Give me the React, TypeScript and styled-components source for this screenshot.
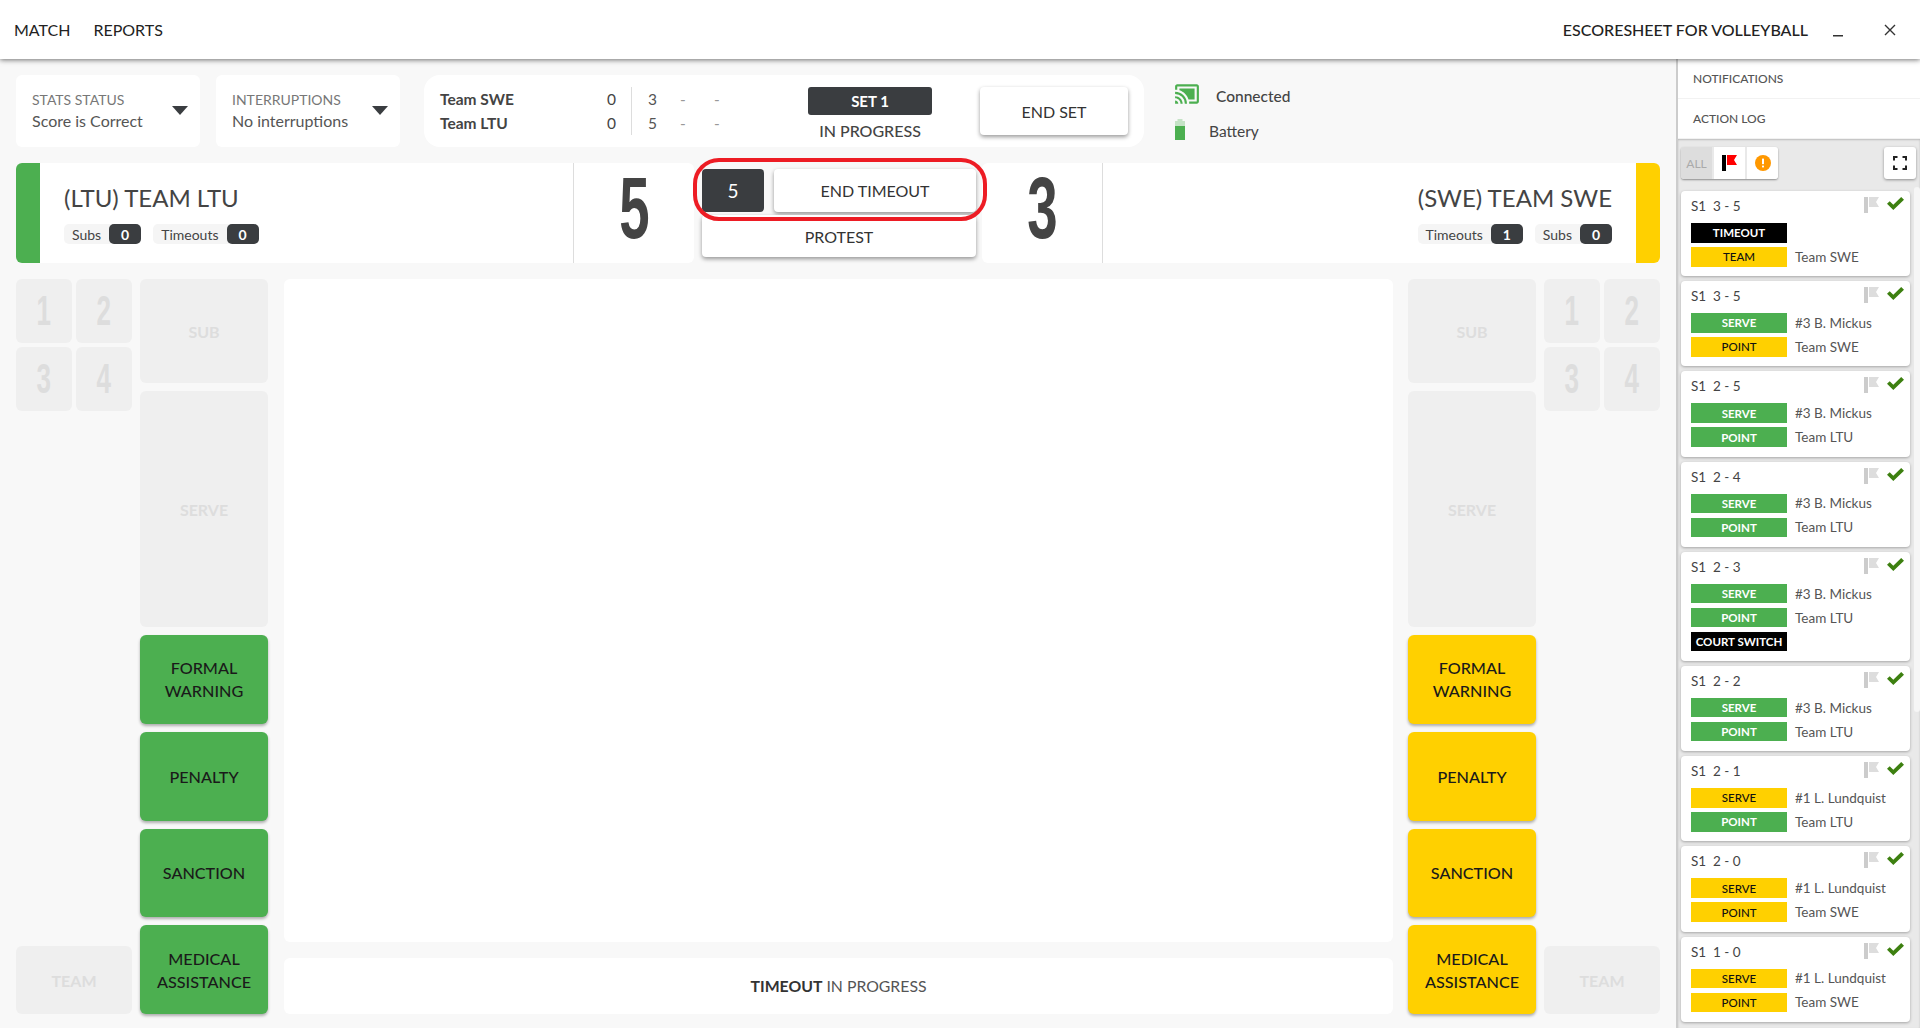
import React from 'react';
import styled, {createGlobalStyle} from 'styled-components';
import {MdCastConnected} from 'react-icons/md';

const GREEN = '#4caf50';
const YELLOW = '#ffd000';
const DARK = '#3a3d40';

const Global = createGlobalStyle`
  html, body { margin: 0; padding: 0; height: 1028px; overflow: hidden; background: #f8f8f8; }
  * { box-sizing: border-box; }
  body { font-family: "Lato", "Liberation Sans", sans-serif; color: #444; }
`;

const Page = styled.div`
  width: 1920px;
  height: 1028px;
  display: flex;
  flex-direction: column;
  overflow: hidden;
`;

const TopBar = styled.header`
  height: 59px;
  flex: none;
  background: #fff;
  display: flex;
  align-items: center;
  padding: 0 24px 0 14px;
  box-shadow: 0 1px 5px rgba(0, 0, 0, .55);
  position: relative;
  z-index: 2;
  color: #222;
  font-size: 16px;
`;

const NavItem = styled.span`
  margin-right: 23px;
`;

const AppTitle = styled.span`
  margin-left: auto;
  font-weight: 500;
  font-size: 16px;
`;

const MinimizeButton = styled.span`
  margin-left: 24px;
  display: flex;
  align-items: center;
  width: 12px;
  height: 20px;
`;

const CloseButton = styled(MinimizeButton)`
  margin-left: 40px;
`;

const Body = styled.div`
  flex: 1;
  display: flex;
  min-height: 0;
`;

const Main = styled.main`
  width: 1676px;
  padding: 16px 16px 14px 16px;
  display: flex;
  flex-direction: column;
  gap: 16px;
`;

const StatusRow = styled.div`
  height: 72px;
  display: flex;
`;

const Select = styled.div`
  width: 184px;
  margin-right: 16px;
  background: #fff;
  border-radius: 6px;
  padding: 15px 16px;
  position: relative;
`;

const SelectLabel = styled.div`
  font-size: 14px;
  line-height: 19px;
  color: #777;
`;

const SelectValue = styled.div`
  font-size: 16px;
  line-height: 20px;
  margin-top: 2px;
  color: #555;
`;

const Caret = styled.span`
  position: absolute;
  right: 12px;
  top: 31px;
  border-left: 8px solid transparent;
  border-right: 8px solid transparent;
  border-top: 9px solid ${DARK};
`;

const ScoreCard = styled.div`
  width: 720px;
  margin-left: 8px;
  background: #fff;
  border-radius: 16px;
  display: flex;
  align-items: center;
  padding: 0 16px;
`;

const Scores = styled.div`
  width: 312px;
  display: grid;
  grid-template-columns: 160px 32px 34px 34px 34px;
  grid-auto-rows: 24px;
  font-size: 15.5px;
  align-items: center;
`;

const TeamCode = styled.span`
  font-weight: 700;
  color: #444;
`;

const SetsWon = styled.span`
  text-align: right;
  border-right: 1px solid #ddd;
  line-height: 24px;
  padding-right: 15px;
`;

const SetScore = styled.span`
  text-align: left;
  padding-left: 16px;
  color: #555;
`;

const SetDash = styled(SetScore)`
  padding-left: 14px;
  color: #999;
`;

const SetInfo = styled.div`
  width: 124px;
  margin: 12px 0 0 56px;
  align-self: flex-start;
  display: flex;
  flex-direction: column;
  align-items: center;
`;

const SetPill = styled.div`
  width: 100%;
  height: 28px;
  background: ${DARK};
  color: #fff;
  font-weight: 700;
  font-size: 15px;
  border-radius: 3px;
  display: flex;
  align-items: center;
  justify-content: center;
`;

const SetState = styled.div`
  margin-top: 4px;
  font-size: 16px;
  line-height: 24px;
  font-weight: 500;
  color: #444;
`;

const ActionButton = styled.button`
  background: #fff;
  border: 0;
  border-radius: 4px;
  box-shadow: 0 2px 4px rgba(0, 0, 0, .4);
  font-family: inherit;
  font-size: 16px;
  color: #333;
  display: flex;
  align-items: center;
  justify-content: center;
  padding: 0;
`;

const EndSet = styled(ActionButton)`
  width: 148px;
  height: 48px;
  margin-left: 48px;
`;

const Health = styled.div`
  margin: 2px 0 0 30px;
  display: grid;
  grid-template-columns: 42px auto;
  grid-template-rows: 36px 35px;
  align-items: center;
  font-size: 15.5px;
  color: #444;
`;

const HealthIcon = styled.span`
  display: flex;
  color: ${GREEN};
  margin-top: -2px;
`;

const ConnectedLabel = styled.span`
  font-weight: 500;
  margin-top: 1px;
`;

const BatteryLabel = styled.span`
  margin-left: -7px;
`;

const TeamsRow = styled.div`
  height: 100px;
  display: flex;
  position: relative;
`;

const TeamCard = styled.section<{$reverse?: boolean}>`
  flex: 1;
  background: #fff;
  border-radius: 6px;
  display: flex;
  flex-direction: ${p => (p.$reverse ? 'row-reverse' : 'row')};
`;

const TeamBand = styled.div<{$color: string; $reverse?: boolean}>`
  width: 24px;
  flex: none;
  background: ${p => p.$color};
  border-radius: ${p => (p.$reverse ? '0 6px 6px 0' : '6px 0 0 6px')};
`;

const TeamInfo = styled.div<{$reverse?: boolean}>`
  flex: 1;
  display: flex;
  flex-direction: column;
  padding: 20px 24px;
  align-items: ${p => (p.$reverse ? 'flex-end' : 'flex-start')};
`;

const TeamName = styled.div`
  font-size: 24px;
  line-height: 30px;
  color: #444;
`;

const Chips = styled.div`
  display: flex;
  gap: 12px;
  margin-top: 11px;
`;

const Chip = styled.div`
  height: 20px;
  background: #f5f5f5;
  border-radius: 5px;
  display: flex;
  align-items: center;
  padding-left: 8px;
  font-size: 14px;
  color: #444;
`;

const ChipCount = styled.span`
  width: 32px;
  height: 20px;
  margin-left: 8px;
  background: ${DARK};
  color: #fff;
  border-radius: 5px;
  font-weight: 700;
  font-size: 14px;
  display: flex;
  align-items: center;
  justify-content: center;
`;

const BigScore = styled.div<{$reverse?: boolean}>`
  width: 121px;
  flex: none;
  display: flex;
  align-items: center;
  justify-content: center;
  padding-bottom: 11px;
  ${p => (p.$reverse ? 'border-right' : 'border-left')}: 1px solid #ddd;
`;

const CondensedDigit = styled.span<{$size: number; $color: string}>`
  display: inline-block;
  font-family: "Liberation Sans Narrow", "Liberation Sans", sans-serif;
  font-weight: 700;
  font-size: ${p => p.$size}px;
  line-height: 1;
  color: ${p => p.$color};
  transform: scaleX(.62);
`;

const CenterBox = styled.div`
  width: 274px;
  margin: 6px 6px 0 8px;
  display: flex;
  flex-direction: column;
  gap: 3px;
`;

const TimerRow = styled.div`
  display: flex;
  height: 43px;
  gap: 10px;
`;

const Timer = styled.div`
  width: 62px;
  background: ${DARK};
  color: #fff;
  border-radius: 4px;
  font-size: 19px;
  display: flex;
  align-items: center;
  justify-content: center;
`;

const EndTimeout = styled(ActionButton)`
  flex: 1;
`;

const Protest = styled(ActionButton)`
  height: 42px;
`;

const RedRing = styled.div`
  position: absolute;
  left: 677px;
  top: -5px;
  width: 294px;
  height: 63px;
  border: 4px solid #ed1c24;
  border-radius: 26px;
  pointer-events: none;
`;

const Court = styled.div`
  flex: 1;
  display: grid;
  grid-template-columns: 116px 128px 1fr 128px 116px;
  column-gap: 8px;
  min-height: 0;
`;

const PlayerColumn = styled.div`
  display: flex;
  flex-direction: column;
  justify-content: space-between;
`;

const PlayerGrid = styled.div`
  display: grid;
  grid-template-columns: 56px 56px;
  grid-auto-rows: 64px;
  gap: 4px;
`;

const Disabled = styled.div`
  background: #efefef;
  border-radius: 6px;
  color: #ddd;
  display: flex;
  align-items: center;
  justify-content: center;
  font-weight: 700;
  font-size: 16px;
`;

const TeamButton = styled(Disabled)`
  height: 68px;
`;

const ActionColumn = styled.div`
  display: flex;
  flex-direction: column;
  gap: 8px;
`;

const SubButton = styled(Disabled)`
  height: 104px;
`;

const ServeButton = styled(Disabled)`
  height: 236px;
`;

const CardButton = styled.div<{$color: string}>`
  flex: 1;
  background: ${p => p.$color};
  border-radius: 6px;
  box-shadow: 0 2px 3px rgba(0, 0, 0, .3);
  color: #1a1a1a;
  font-size: 16.2px;
  line-height: 23px;
  font-weight: 500;
  text-align: center;
  display: flex;
  align-items: center;
  justify-content: center;
`;

const CenterColumn = styled.div`
  margin: 0 7px 0 8px;
  display: flex;
  flex-direction: column;
  gap: 16px;
`;

const Board = styled.div`
  flex: 1;
  background: #fff;
  border-radius: 6px;
`;

const StateBar = styled.div`
  height: 56px;
  background: #fff;
  border-radius: 6px;
  display: flex;
  align-items: center;
  justify-content: center;
  font-size: 15.8px;
  color: #555;
  padding-bottom: 1px;
  b {
    color: #333;
    font-weight: 700;
    margin-right: 4px;
  }
`;

const Sidebar = styled.aside`
  width: 244px;
  border-left: 2px solid #ccc;
  display: flex;
  flex-direction: column;
  background: #e9e9e9;
  position: relative;
`;

const SideTab = styled.div`
  height: 40px;
  flex: none;
  background: #fff;
  border-bottom: 1px solid #f2f2f2;
  display: flex;
  align-items: center;
  padding-left: 15px;
  font-size: 12px;
  font-weight: 500;
  color: #555;
`;

const LogArea = styled.div`
  flex: 1;
  min-height: 0;
  padding: 8px 4px 0 3px;
  position: relative;
  box-shadow: inset 0 1px 2px rgba(0, 0, 0, .2);
  overflow: hidden;
`;

const Filters = styled.div`
  display: flex;
  justify-content: space-between;
  height: 32px;
  margin-bottom: 12px;
`;

const FilterGroup = styled.div`
  display: flex;
  gap: 2px;
  border-radius: 3px;
  overflow: hidden;
  box-shadow: 0 1px 2px rgba(0, 0, 0, .4);
`;

const FilterTab = styled.div<{$active?: boolean}>`
  width: 31px;
  height: 32px;
  background: ${p => (p.$active ? '#ddd' : '#fff')};
  color: #aaa;
  font-size: 12px;
  display: flex;
  align-items: center;
  justify-content: center;
`;

const ExpandButton = styled.div`
  width: 32px;
  height: 32px;
  background: #fff;
  border-radius: 3px;
  box-shadow: 0 1px 3px rgba(0, 0, 0, .4);
  display: flex;
  align-items: center;
  justify-content: center;
`;

const LogCard = styled.article`
  width: 229px;
  background: #fff;
  border-radius: 4px;
  padding: 7px 10px 9.7px;
  margin-bottom: 5px;
  box-shadow: 0 1px 3px rgba(0, 0, 0, .3);
`;

const LogHead = styled.div`
  height: 25px;
  display: flex;
  justify-content: space-between;
  font-size: 13.5px;
  line-height: 17px;
  color: #444;
  white-space: pre;
`;

const LogMarks = styled.span`
  display: flex;
  gap: 8px;
  margin-right: -4px;
  margin-top: -1px;
`;

const LogRow = styled.div`
  display: flex;
  align-items: center;
  height: 19.5px;
  margin-bottom: 4.5px;
  &:last-child { margin-bottom: 0; }
`;

const Tag = styled.span<{$bg: string; $fg: string; $weight: number}>`
  width: 96px;
  height: 100%;
  background: ${p => p.$bg};
  color: ${p => p.$fg};
  font-size: 11.5px;
  font-weight: ${p => p.$weight};
  display: flex;
  align-items: center;
  justify-content: center;
`;

const LogWho = styled.span`
  margin-left: 8px;
  font-size: 13.5px;
  color: #555;
`;

const ScrollThumb = styled.div`
  position: absolute;
  right: 0;
  top: 48px;
  width: 6px;
  height: 525px;
  background: #f6f6f6;
  border-radius: 3px;
`;

function FlagIcon({pole,flag}:{pole:string;flag:string}){
  return (<svg width="15" height="16" viewBox="0 0 15 16">
    <rect x="0" y="0" width="4" height="16" fill={pole}/>
    <path d="M5 0H15L12 5L15 10H5Z" fill={flag}/>
  </svg>);
}

function CheckIcon(){
  return (<svg width="17" height="13" viewBox="0 0 17 13">
    <path d="M6.3 13L0 6.8L2.7 4.2L6.3 7.7L14.2 0L17 2.7Z" fill="#3d8010"/>
  </svg>);
}

function WarnIcon(){
  return (<svg width="16" height="16" viewBox="0 0 16 16">
    <circle cx="8" cy="8" r="8" fill="#ff9800"/>
    <rect x="7" y="3.4" width="2" height="5.8" rx=".6" fill="#fff"/>
    <rect x="7" y="10.4" width="2" height="2" rx=".6" fill="#fff"/>
  </svg>);
}

function ExpandIcon(){
  return (<svg width="14" height="14" viewBox="0 0 14 14" fill="none" stroke="#222" strokeWidth="2">
    <path d="M1 4.5V1H4.5M9.5 1H13V4.5M13 9.5V13H9.5M4.5 13H1V9.5"/>
  </svg>);
}

function BatteryIcon(){
  return (<svg width="12" height="21" viewBox="0 0 12 21">
    <rect x="3.5" y="0" width="5" height="3" fill="#c5e3c6"/>
    <rect x="1" y="2" width="10" height="5" fill="#c5e3c6"/>
    <rect x="1" y="7" width="10" height="14" fill={GREEN}/>
  </svg>);
}

interface IEntry {
  score:string;
  rows:{kind:'serve'|'point'|'timeout'|'team'|'switch';side?:'g'|'y';who?:string}[];
}

const MICKUS='#3 B. Mickus';
const LUNDQUIST='#1 L. Lundquist';

const entries:IEntry[]=[
  {score:'3 - 5',rows:[{kind:'timeout'},{kind:'team',side:'y',who:'Team SWE'}]},
  {score:'3 - 5',rows:[{kind:'serve',side:'g',who:MICKUS},{kind:'point',side:'y',who:'Team SWE'}]},
  {score:'2 - 5',rows:[{kind:'serve',side:'g',who:MICKUS},{kind:'point',side:'g',who:'Team LTU'}]},
  {score:'2 - 4',rows:[{kind:'serve',side:'g',who:MICKUS},{kind:'point',side:'g',who:'Team LTU'}]},
  {score:'2 - 3',rows:[{kind:'serve',side:'g',who:MICKUS},{kind:'point',side:'g',who:'Team LTU'},{kind:'switch'}]},
  {score:'2 - 2',rows:[{kind:'serve',side:'g',who:MICKUS},{kind:'point',side:'g',who:'Team LTU'}]},
  {score:'2 - 1',rows:[{kind:'serve',side:'y',who:LUNDQUIST},{kind:'point',side:'g',who:'Team LTU'}]},
  {score:'2 - 0',rows:[{kind:'serve',side:'y',who:LUNDQUIST},{kind:'point',side:'y',who:'Team SWE'}]},
  {score:'1 - 0',rows:[{kind:'serve',side:'y',who:LUNDQUIST},{kind:'point',side:'y',who:'Team SWE'}]},
];

const tagLabels={serve:'SERVE',point:'POINT',timeout:'TIMEOUT',team:'TEAM',switch:'COURT SWITCH'};

function LogEntry({entry}:{entry:IEntry}){
  return (<LogCard>
    <LogHead>
      <span>{'S1  '+entry.score}</span>
      <LogMarks>
        <FlagIcon pole="#ccc" flag="#ddd"/>
        <CheckIcon/>
      </LogMarks>
    </LogHead>
    {entry.rows.map((row,i)=>{
      const bg=row.side==='g'?GREEN:row.side==='y'?YELLOW:'#000';
      const fg=row.side==='y'?'#111':'#fff';
      return (<LogRow key={i}>
        <Tag $bg={bg} $fg={fg} $weight={row.side==='y'?500:700}>{tagLabels[row.kind]}</Tag>
        {row.who&&<LogWho>{row.who}</LogWho>}
      </LogRow>);
    })}
  </LogCard>);
}

function Players(){
  return (<PlayerColumn>
    <PlayerGrid>
      {[1,2,3,4].map(n=>(<Disabled key={n}><CondensedDigit $size={42} $color="#ddd">{n}</CondensedDigit></Disabled>))}
    </PlayerGrid>
    <TeamButton>TEAM</TeamButton>
  </PlayerColumn>);
}

function Actions({color}:{color:string}){
  return (<ActionColumn>
    <SubButton>SUB</SubButton>
    <ServeButton>SERVE</ServeButton>
    <CardButton $color={color}>FORMAL<br/>WARNING</CardButton>
    <CardButton $color={color}>PENALTY</CardButton>
    <CardButton $color={color}>SANCTION</CardButton>
    <CardButton $color={color}>MEDICAL<br/>ASSISTANCE</CardButton>
  </ActionColumn>);
}

function App(){
  return (<Page>
    <Global/>
    <TopBar>
      <NavItem>MATCH</NavItem>
      <NavItem>REPORTS</NavItem>
      <AppTitle>ESCORESHEET FOR VOLLEYBALL</AppTitle>
      <MinimizeButton>
        <svg width="12" height="20" viewBox="0 0 12 20"><rect x="1" y="15" width="10" height="1.5" fill="#333"/></svg>
      </MinimizeButton>
      <CloseButton>
        <svg width="12" height="12" viewBox="0 0 12 12" stroke="#333" strokeWidth="1.4"><path d="M1 1L11 11M11 1L1 11"/></svg>
      </CloseButton>
    </TopBar>
    <Body>
      <Main>
        <StatusRow>
          <Select>
            <SelectLabel>STATS STATUS</SelectLabel>
            <SelectValue>Score is Correct</SelectValue>
            <Caret/>
          </Select>
          <Select>
            <SelectLabel>INTERRUPTIONS</SelectLabel>
            <SelectValue>No interruptions</SelectValue>
            <Caret/>
          </Select>
          <ScoreCard>
            <Scores>
              <TeamCode>Team SWE</TeamCode><SetsWon>0</SetsWon><SetScore>3</SetScore><SetDash>-</SetDash><SetDash>-</SetDash>
              <TeamCode>Team LTU</TeamCode><SetsWon>0</SetsWon><SetScore>5</SetScore><SetDash>-</SetDash><SetDash>-</SetDash>
            </Scores>
            <SetInfo>
              <SetPill>SET 1</SetPill>
              <SetState>IN PROGRESS</SetState>
            </SetInfo>
            <EndSet>END SET</EndSet>
          </ScoreCard>
          <Health>
            <HealthIcon><MdCastConnected size={26}/></HealthIcon>
            <ConnectedLabel>Connected</ConnectedLabel>
            <HealthIcon><BatteryIcon/></HealthIcon>
            <BatteryLabel>Battery</BatteryLabel>
          </Health>
        </StatusRow>
        <TeamsRow>
          <TeamCard>
            <TeamBand $color={GREEN}/>
            <TeamInfo>
              <TeamName>(LTU) TEAM LTU</TeamName>
              <Chips>
                <Chip>Subs<ChipCount>0</ChipCount></Chip>
                <Chip>Timeouts<ChipCount>0</ChipCount></Chip>
              </Chips>
            </TeamInfo>
            <BigScore><CondensedDigit $size={88} $color="#444">5</CondensedDigit></BigScore>
          </TeamCard>
          <CenterBox>
            <TimerRow>
              <Timer>5</Timer>
              <EndTimeout>END TIMEOUT</EndTimeout>
            </TimerRow>
            <Protest>PROTEST</Protest>
          </CenterBox>
          <TeamCard $reverse>
            <TeamBand $color={YELLOW} $reverse/>
            <TeamInfo $reverse>
              <TeamName>(SWE) TEAM SWE</TeamName>
              <Chips>
                <Chip>Timeouts<ChipCount>1</ChipCount></Chip>
                <Chip>Subs<ChipCount>0</ChipCount></Chip>
              </Chips>
            </TeamInfo>
            <BigScore $reverse><CondensedDigit $size={88} $color="#444">3</CondensedDigit></BigScore>
          </TeamCard>
          <RedRing/>
        </TeamsRow>
        <Court>
          <Players/>
          <Actions color={GREEN}/>
          <CenterColumn>
            <Board/>
            <StateBar><b>TIMEOUT</b> IN PROGRESS</StateBar>
          </CenterColumn>
          <Actions color={YELLOW}/>
          <Players/>
        </Court>
      </Main>
      <Sidebar>
        <SideTab>NOTIFICATIONS</SideTab>
        <SideTab>ACTION LOG</SideTab>
        <LogArea>
          <Filters>
            <FilterGroup>
              <FilterTab $active>ALL</FilterTab>
              <FilterTab><FlagIcon pole="#000" flag="#f00"/></FilterTab>
              <FilterTab><WarnIcon/></FilterTab>
            </FilterGroup>
            <ExpandButton><ExpandIcon/></ExpandButton>
          </Filters>
          {entries.map((entry,i)=>(<LogEntry key={i} entry={entry}/>))}
          <ScrollThumb/>
        </LogArea>
      </Sidebar>
    </Body>
  </Page>);
}

export default App;
